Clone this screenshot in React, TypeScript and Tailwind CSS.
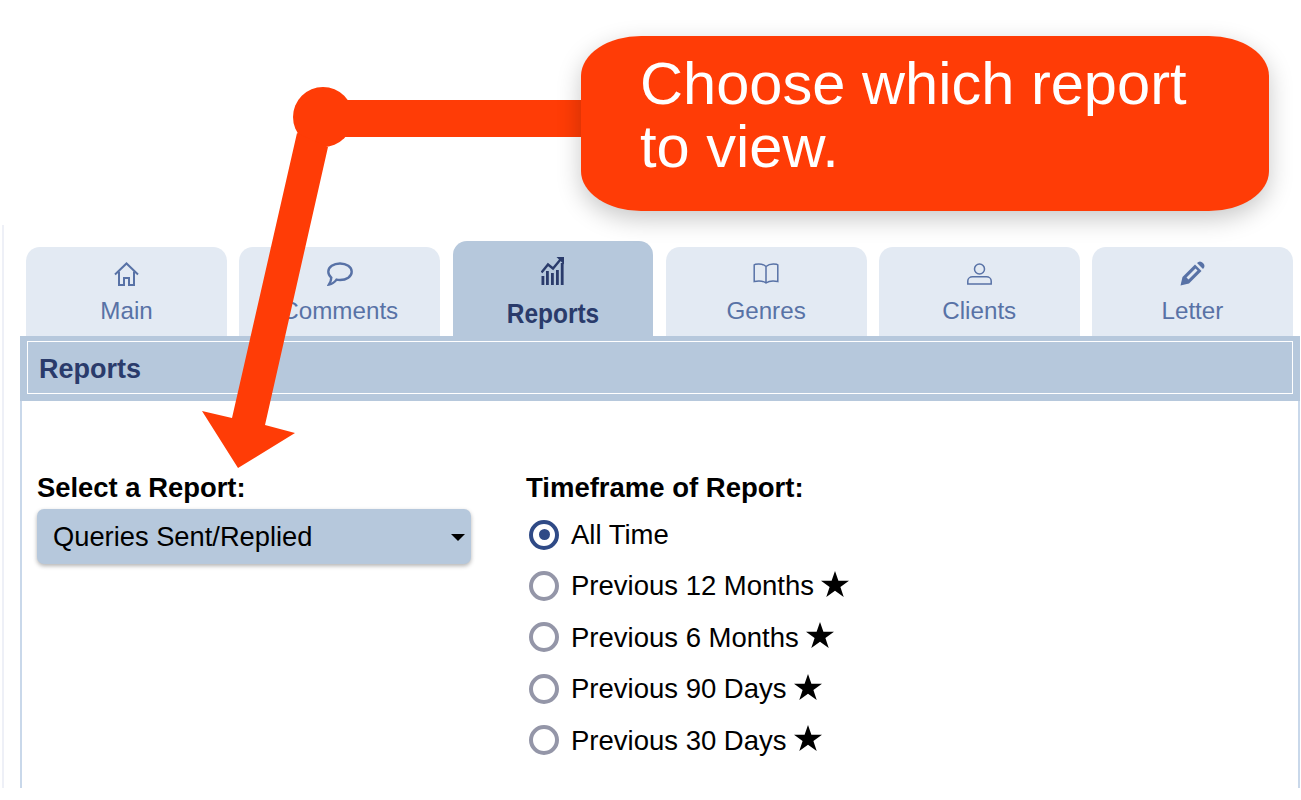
const font = "font-['Liberation_Sans',Arial,sans-serif]"

function HomeIcon() {
  return (
    <svg viewBox="0 0 25 24" className="h-[24px] w-[25px]" fill="none" stroke="currentColor" strokeWidth="2">
      <path d="M1 12.5 L12.5 1.5 L24 12.5" />
      <path d="M5 9.5 V23 H10 V16 H15 V23 H20 V9.5" />
    </svg>
  )
}

function CommentIcon() {
  return (
    <svg viewBox="0 0 26 24" className="h-[24px] w-[26px]" fill="none" stroke="currentColor" strokeWidth="2.4">
      <path d="M13 1.5 C19.5 1.5 24.7 5 24.7 9.8 C24.7 14.6 19.5 18 13 18 C11.8 18 10.6 17.9 9.5 17.6 C7.8 20 5 22 2 22.5 C3.3 20.5 4.3 18 4.3 15.6 C2.4 14 1.3 12 1.3 9.8 C1.3 5 6.5 1.5 13 1.5 Z" />
    </svg>
  )
}

function ChartIcon() {
  return (
    <svg viewBox="0 0 23 29" className="h-[29px] w-[23px]" fill="currentColor">
      <rect x="0.5" y="20" width="2.8" height="9" />
      <rect x="5" y="15" width="2.8" height="14" />
      <rect x="10" y="17" width="2.8" height="12" />
      <rect x="15" y="14" width="2.8" height="15" />
      <rect x="19.8" y="7" width="2.8" height="22" />
      <path d="M0.5 16.5 L7 8.5 L12 12.5 L19.5 3.5" fill="none" stroke="currentColor" strokeWidth="2.4" />
      <path d="M15.5 1 H23 V8.5 Z" />
    </svg>
  )
}

function BookIcon() {
  return (
    <svg viewBox="0 0 26 21" className="h-[21px] w-[26px]" fill="none" stroke="currentColor" strokeWidth="1.5">
      <path d="M13 3.5 C10.5 1.2 6 0.6 2.5 1.2 L1.2 2 V18.5 C5.5 17.6 10 17.8 13 20 C16 17.8 20.5 17.6 24.8 18.5 V2 L23.5 1.2 C20 0.6 15.5 1.2 13 3.5 V20" />
    </svg>
  )
}

function UserIcon() {
  return (
    <svg viewBox="0 0 25 22" className="h-[22px] w-[25px]" fill="none" stroke="currentColor" strokeWidth="1.5">
      <circle cx="12.5" cy="6" r="5" />
      <path d="M0.8 21 V18 C0.8 15.5 3 13.8 5.5 13.8 H19.5 C22 13.8 24.2 15.5 24.2 18 V21 Z" />
    </svg>
  )
}

function PencilIcon() {
  return (
    <svg viewBox="0 0 25 25" className="h-[25px] w-[25px]" fill="currentColor">
      <path d="M0.5 24.5 L2.5 16 L15 3.5 L21.5 10 L9 22.5 Z" />
      <path d="M17 2 C18.8 0 21 0 23 2 C25 4 25 6.2 23 8 Z" />
      <path d="M6.5 16.5 L15.5 7.5 L17.5 9.5 L8.5 18.5 Z" fill="#e3eaf3" />
    </svg>
  )
}

const tabs = [
  { name: "Main", icon: <HomeIcon /> },
  { name: "Comments", icon: <CommentIcon /> },
  { name: "Reports", icon: <ChartIcon />, active: true },
  { name: "Genres", icon: <BookIcon /> },
  { name: "Clients", icon: <UserIcon /> },
  { name: "Letter", icon: <PencilIcon /> },
]

const timeframes = [
  { label: "All Time", checked: true },
  { label: "Previous 12 Months", star: true },
  { label: "Previous 6 Months", star: true },
  { label: "Previous 90 Days", star: true },
  { label: "Previous 30 Days", star: true },
]

export default function App() {
  return (
    <div className={`relative h-[800px] overflow-hidden bg-white ${font}`}>
      {/* faint page edge */}
      <div className="absolute left-[2px] top-[225px] bottom-[12px] w-[2px] bg-[#eef0f7]" />

      <div className="pt-[241px]">
        <div className="ml-[26px] grid h-[95px] w-[1267px] grid-cols-6 items-end gap-x-[12px]">
          {tabs.map((tab) =>
            tab.active ? (
              <div key={tab.name} className="mx-[1px] flex h-[95px] flex-col items-center rounded-t-[14px] bg-[#b6c8dc] pt-[15px] text-[#2a3b6b]">
                <div className="flex h-[29px] items-center">{tab.icon}</div>
                <span className="mt-[14px] scale-x-[0.89] text-[27.5px] leading-[30px] font-bold">{tab.name}</span>
              </div>
            ) : (
              <div key={tab.name} className="flex h-[89px] flex-col items-center rounded-t-[14px] bg-[#e3eaf3] pt-[13px] text-[#5872a6]">
                <div className="flex h-[27px] items-center">{tab.icon}</div>
                <span className="mt-[10px] text-[24.2px] leading-[28px]">{tab.name}</span>
              </div>
            ),
          )}
        </div>

        <div className="ml-[20px] h-[452px] w-[1280px] border-x-[2px] border-[#c9d8ea]">
          <div className="-mx-[2px] border-x-[7px] border-t-[5px] border-b-[7px] border-[#b6c8dc]">
            <div className="flex h-[53px] items-center border-[1px] border-white bg-[#b6c8dc] pl-[11px] pt-[3px] text-[27px] font-bold text-[#2a3b6b]">
              Reports
            </div>
          </div>

          <div className="flex pl-[15px] pt-[72px]">
            <div className="w-[489px]">
              <div className="text-[27.4px] leading-[30px] font-bold text-black">Select a Report:</div>
              <div className="mt-[6px] flex h-[55px] w-[434px] items-center justify-between rounded-[7px] bg-[#b6c8dc] pl-[16px] pr-[6px] pt-[1px] text-[27.3px] text-black shadow-[0_2px_4px_rgba(0,0,0,0.3)]">
                Queries Sent/Replied
                <span className="h-0 w-0 border-x-[7.5px] border-t-[7px] border-x-transparent border-t-black" />
              </div>
            </div>

            <div>
              <div className="text-[27.5px] leading-[30px] font-bold text-black">Timeframe of Report:</div>
              <div className="mt-[6px] flex flex-col">
                {timeframes.map((item) => (
                  <div key={item.label} className="flex h-[51.4px] items-center text-[27.5px] text-black">
                    {item.checked ? (
                      <span className="ml-[3px] flex h-[30px] w-[30px] items-center justify-center rounded-full border-[4px] border-[#2f4a86]">
                        <span className="h-[11px] w-[11px] rounded-full bg-[#2f4a86]" />
                      </span>
                    ) : (
                      <span className="ml-[3px] h-[30px] w-[30px] rounded-full border-[4px] border-[#9496a8]" />
                    )}
                    <span className="ml-[12px]">{item.label}</span>
                    {item.star && (
                      <svg viewBox="0 0 28 26" className="ml-[7px] h-[26px] w-[28px] -translate-y-[2px]" fill="#000">
                        <path d="M14 0 L17.4 9.8 H28 L19.4 16 L22.7 26 L14 19.8 L5.3 26 L8.6 16 L0 9.8 H10.6 Z" />
                      </svg>
                    )}
                  </div>
                ))}
              </div>
            </div>
          </div>
        </div>
      </div>

      {/* annotation arrow */}
      <svg className="absolute left-0 top-0 h-[800px] w-[1301px]" viewBox="0 0 1301 800" fill="#ff3c06">
        <circle cx="323" cy="117" r="30" />
        <rect x="323" y="100" width="260" height="37" />
        <polygon points="297,133 328,147 265,425 295,433 238,468 202,411 232,418" />
      </svg>

      {/* callout */}
      <div className="absolute left-[581px] top-[36px] h-[175px] w-[688px] rounded-[60px/40px] bg-[#ff3c06] pl-[59px] pt-[16px] text-[59.6px] leading-[63px] text-white shadow-[0_8px_24px_rgba(0,0,0,0.22)]">
        Choose which report
        <br />
        to view.
      </div>
    </div>
  )
}
